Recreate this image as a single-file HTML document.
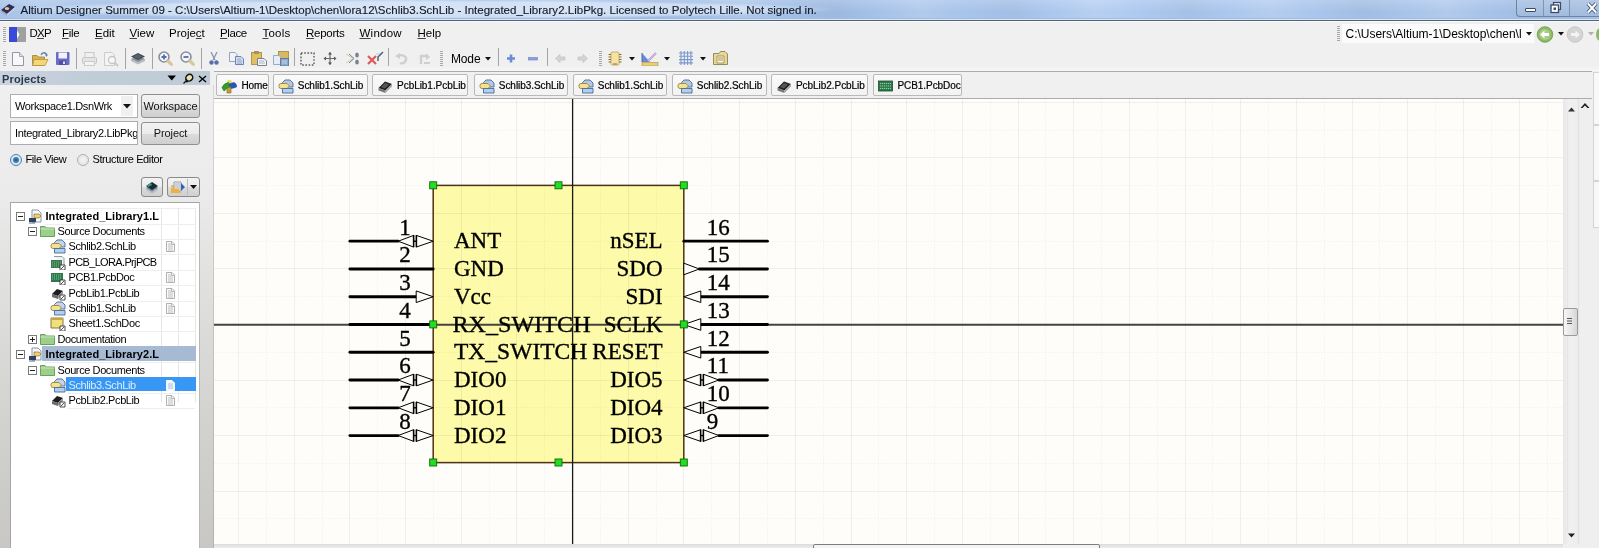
<!DOCTYPE html>
<html><head><meta charset="utf-8">
<style>
*{margin:0;padding:0;box-sizing:border-box}
body{will-change:transform}
html,body{width:1599px;height:548px;overflow:hidden;background:#f0f0f0;font-family:"Liberation Sans",sans-serif;color:#000}
.a{position:absolute}
#title{left:0;top:0;width:1599px;height:19px;background:repeating-linear-gradient(75deg,rgba(255,255,255,0) 0px,rgba(255,255,255,0.12) 40px,rgba(255,255,255,0) 80px,rgba(0,0,40,0.04) 130px,rgba(255,255,255,0) 170px),linear-gradient(90deg,#a6c2e8 0%,#aac6ee 30%,#a2bfe6 50%,#aecaf0 70%,#a4c0e6 100%)}
#title .t{left:20.5px;top:4px;font-size:11.5px;color:#141c2a;white-space:nowrap;letter-spacing:0.02px;-webkit-text-stroke:0.15px #141c2a}
#menu{left:0;top:20px;width:1599px;height:26px;background:#f0f0f0}
.mi{top:7px;font-size:11.5px;color:#000;white-space:nowrap}
.mi u{text-decoration:underline;text-decoration-color:#444}
#tb{left:0;top:46px;width:1599px;height:25px;background:#f0f0f0}
#proj{left:0;top:71px;width:210px;height:15px;background:linear-gradient(#d3dbe6,#c9d3df)}
#tabs{left:214px;top:71px;width:1378px;height:28px;background:#f0f0f0;border-top:1px solid #acacac;border-bottom:1px solid #acacac}
.tab{top:2px;height:22px;border:1px solid #b9b9b9;border-radius:2px;background:linear-gradient(#fafafa,#f2f2f2);font-size:10px;color:#000;white-space:nowrap}
.tab span{position:absolute;top:4.5px;-webkit-text-stroke:0.2px #000;letter-spacing:-0.05px}
#canvas{left:214px;top:99px;width:1349px;height:445px;background:#fffdf8}

#lp{left:0;top:71px;width:214px;height:477px;background:linear-gradient(#f0f0f0 0px,#ebebeb 120px,#dcdcda 250px,#cfcfcc 380px,#c8c7c4 477px)}
#lp .hdr{left:0;top:0;width:210px;height:14px;background:linear-gradient(90deg,#c9d3df,#c2cdda 40%,#bfcad7)}
#lp .hdr b{position:absolute;left:2px;top:2px;font-size:11px;color:#2b3a4a;letter-spacing:0.15px}
.combo{background:#fff;border:1px solid #abadb3;height:24px;width:128px}
.combo span{position:absolute;left:4px;top:5px;font-size:11px;letter-spacing:-0.35px;color:#000;white-space:nowrap}
.btn{border:1px solid #8f8f8f;border-radius:3px;background:linear-gradient(#f3f3f3 0%,#ebebeb 50%,#dcdcdc 51%,#cfcfcf 100%);height:24px;width:59px}
.btn span{position:absolute;top:5px;font-size:11px;letter-spacing:-0.1px;color:#111;white-space:nowrap;left:0;width:100%;text-align:center}
.rad{width:12px;height:12px;border-radius:50%;border:1px solid #8a8a8a;background:radial-gradient(#fff,#e6e6e6)}
.lbl{font-size:11px;letter-spacing:-0.4px;color:#000;white-space:nowrap}
#tree{left:10px;top:131px;width:190px;height:350px;background:#fff;border:1px solid #a5a5a5;border-right-color:#b8b8b8}
.row{position:absolute;left:0;width:188px;height:15px}
.row .tx{position:absolute;top:1px;font-size:11px;letter-spacing:-0.4px;color:#000;white-space:nowrap}
.row .tb{font-weight:bold;letter-spacing:0.05px}
.exp{position:absolute;width:9px;height:9px;border:1px solid #7a7a7a;background:#fff}
.exp:before{content:"";position:absolute;left:1px;top:3px;width:5px;height:1px;background:#222}
.exp.p:after{content:"";position:absolute;left:3px;top:1px;width:1px;height:5px;background:#222}
.colv{position:absolute;top:5px;width:1px;height:194px;background:#e6e6e6}
.rowl{position:absolute;height:1px;background:#eeeeee}
</style></head><body>
<div id="title" class="a">
<div class="a" style="left:0;top:0;width:1599px;height:19px;background:linear-gradient(180deg,rgba(255,255,255,0.18),rgba(255,255,255,0) 60%)"></div>
<div class="a" style="left:8px;top:0px;width:830px;height:19px;background:radial-gradient(closest-side,rgba(232,240,250,0.75) 0%,rgba(232,240,250,0.6) 80%,rgba(232,240,250,0) 100%)"></div>

<svg class="a" style="left:0;top:1px" width="16" height="16"><path d="M1 9L9 3L15 6L7 13Z" fill="#2a2e5a"/><path d="M1 9L7 13L7 15L1 11Z" fill="#9aa8c0"/><path d="M7 13L15 6V8L7 15Z" fill="#c8d0e0"/><ellipse cx="7" cy="7.5" rx="2.2" ry="1.6" fill="#e8c880"/></svg>
<div class="t a">Altium Designer Summer 09 - C:\Users\Altium-1\Desktop\chen\lora12\Schlib3.SchLib - Integrated_Library2.LibPkg. Licensed to Polytech Lille. Not signed in.</div>
<div class="a" style="left:1516px;top:0;width:27px;height:17px;border:1px solid #6a83a6;border-top:none;border-right:none;border-radius:0 0 0 4px;background:linear-gradient(#b4cae6,#a2bbdd)"></div>
<div class="a" style="left:1543px;top:0;width:26px;height:17px;border-bottom:1px solid #6a83a6;border-left:1px solid #7d94b5;background:linear-gradient(#b4cae6,#a2bbdd)"></div>
<div class="a" style="left:1569px;top:0;width:30px;height:17px;border-bottom:1px solid #6a83a6;border-left:1px solid #7d94b5;background:linear-gradient(#b4cae6,#a2bbdd)"></div>
<div class="a" style="left:1525px;top:8px;width:11px;height:4px;background:#fff;border:1px solid #3a4a6a;border-radius:1px"></div>
<svg class="a" style="left:1549px;top:1px" width="14" height="14"><rect x="4.5" y="1.5" width="7" height="7" fill="#e8eef8" stroke="#3a4a6a" stroke-width="1.2"/><rect x="2" y="4" width="7.5" height="7.5" fill="#fff" stroke="#3a4a6a" stroke-width="1.3"/><rect x="4.5" y="6.5" width="2.5" height="2.5" fill="#3a4a6a"/></svg>
<svg class="a" style="left:1586px;top:2px" width="13" height="12"><path d="M2 1.5L10 10.5M10 1.5L2 10.5" stroke="#3a4a6a" stroke-width="3.6"/><path d="M2 1.5L10 10.5M10 1.5L2 10.5" stroke="#fff" stroke-width="2"/></svg>
</div>
<div id="menu" class="a">
<svg class="a" style="left:3px;top:7px" width="3" height="15"><path d="M0 0.5H3M0 2.5H3M0 4.5H3M0 6.5H3M0 8.5H3M0 10.5H3M0 12.5H3M0 14.5H3" stroke="#a8a8a8" stroke-width="1"/></svg>
<svg class="a" style="left:9px;top:7px" width="17" height="15"><rect x="0" y="0" width="8" height="15" fill="#3a4ad8"/><rect x="8" y="0" width="9" height="15" fill="#a0a0a0"/><path d="M4 3L10 7.5L4 12Z" fill="#3a4ad8"/><path d="M8 3.5L10.5 7.5L8 11.5" fill="#fff"/></svg>
<div class="mi a" style="left:29.5px;letter-spacing:-0.8px">D<u>X</u>P</div>
<div class="mi a" style="left:62px;letter-spacing:-0.3px"><u>F</u>ile</div>
<div class="mi a" style="left:95px"><u>E</u>dit</div>
<div class="mi a" style="left:129.5px"><u>V</u>iew</div>
<div class="mi a" style="left:169px">Proje<u>c</u>t</div>
<div class="mi a" style="left:220px;letter-spacing:-0.4px"><u>P</u>lace</div>
<div class="mi a" style="left:262.5px;letter-spacing:0.2px"><u>T</u>ools</div>
<div class="mi a" style="left:306px;letter-spacing:-0.25px"><u>R</u>eports</div>
<div class="mi a" style="left:359.5px;letter-spacing:0.25px"><u>W</u>indow</div>
<div class="mi a" style="left:417.5px"><u>H</u>elp</div>
<svg class="a" style="left:1337px;top:6px" width="4" height="15"><path d="M0 0.5H3M0 2.5H3M0 4.5H3M0 6.5H3M0 8.5H3M0 10.5H3M0 12.5H3M0 14.5H3" stroke="#a8a8a8" stroke-width="1"/></svg>
<div class="a" style="left:1342px;top:4px;width:192px;height:19px;background:#fbfbfb"></div>
<div class="mi a" style="left:1345.5px;font-size:12px;letter-spacing:-0.02px">C:\Users\Altium-1\Desktop\chen\l</div>
<svg class="a" style="left:1526px;top:12px" width="6" height="4"><path d="M0 0H6L3 3.5Z" fill="#111"/></svg>
<svg class="a" style="left:1536px;top:6px" width="18" height="17"><circle cx="9" cy="8.5" r="7.8" fill="#8cb868" stroke="#6a9a4a" stroke-width="0.8"/><circle cx="9" cy="8.5" r="5.5" fill="#a8cc88"/><path d="M4 8.5L8.5 4.5V7H13V10H8.5V12.5Z" fill="#fff"/></svg>
<svg class="a" style="left:1558px;top:12px" width="6" height="4"><path d="M0 0H6L3 3.5Z" fill="#111"/></svg>
<svg class="a" style="left:1566px;top:6px" width="18" height="17"><circle cx="9" cy="8.5" r="7.8" fill="#d4d4d4" stroke="#c0c0c0" stroke-width="0.8"/><path d="M14 8.5L9.5 4.5V7H5V10H9.5V12.5Z" fill="#f4f4f4"/></svg>
<svg class="a" style="left:1588px;top:12px" width="6" height="4"><path d="M0 0H6L3 3.5Z" fill="#b0b0b0"/></svg>
<div class="a" style="left:1596px;top:8px;width:8px;height:13px;border-radius:50%;background:#8cb868"></div>
</div>
<div class="a" style="left:0;top:18px;width:1599px;height:1px;background:#a4bcd8"></div>
<div class="a" style="left:0;top:19px;width:1599px;height:1px;background:#d6e6f8"></div>
<div class="a" style="left:0;top:20px;width:1599px;height:1px;background:#52627a"></div>
<div class="a" style="left:0;top:21px;width:1599px;height:1px;background:#f9f9fb"></div>
<div id="tb" class="a">
<svg class="a" style="left:3px;top:5px" width="3" height="15"><path d="M0 0.5H3M0 2.5H3M0 4.5H3M0 6.5H3M0 8.5H3M0 10.5H3M0 12.5H3M0 14.5H3" stroke="#a8a8a8" stroke-width="1"/></svg>
<svg class="a" style="left:12px;top:6px" width="12" height="14"><path d="M0.5 0.5H7.5L11.5 4.5V13.5H0.5Z" fill="#f8f8fa" stroke="#9098a8" stroke-width="1"/><path d="M7.5 0.5V4.5H11.5" fill="#dde" stroke="#9098a8" stroke-width="0.8"/></svg>
<svg class="a" style="left:32px;top:5px" width="17" height="15"><path d="M0.5 4.5H5L6.5 6H12.5V14.5H0.5Z" fill="#d8b450" stroke="#a08030" stroke-width="0.8"/><path d="M2 8.5H16L13 14.5H0.5Z" fill="#f4d878" stroke="#b89038" stroke-width="0.8"/><path d="M9 4C10 1 14 1 14.5 4" fill="none" stroke="#6080b0" stroke-width="1.3"/><path d="M13 3.5L16 3.5L14.5 6Z" fill="#6080b0"/></svg>
<svg class="a" style="left:56px;top:6px" width="14" height="14"><rect x="0" y="0" width="13.5" height="13" rx="1" fill="#6a6ac8"/><rect x="2.5" y="0.5" width="8.5" height="6" fill="#f2f2fa"/><rect x="3" y="8.5" width="7" height="4.5" fill="#5050a0"/><rect x="7" y="9.5" width="2" height="2.5" fill="#e0e0f0"/></svg>
<div class="a" style="left:76px;top:2px;width:1px;height:21px;background:#a4a4a4"></div>
<svg class="a" style="left:82px;top:6px" width="15" height="14"><rect x="3" y="0.5" width="9" height="5" fill="#f0f0f0" stroke="#c8c8c8"/><rect x="0.5" y="5.5" width="14" height="6" rx="1" fill="#e4e4e4" stroke="#c4c4c4"/><rect x="2.5" y="9.5" width="10" height="4" fill="#f4f4f4" stroke="#cccccc"/></svg>
<svg class="a" style="left:104px;top:6px" width="16" height="15"><path d="M0.5 0.5H8L10.5 3V13.5H0.5Z" fill="#f4f4f4" stroke="#cccccc"/><circle cx="8" cy="8" r="3.5" fill="#f8f8f8" stroke="#c4c4c4" stroke-width="1.3"/><path d="M10.5 10.5L14 14" stroke="#c8c8c8" stroke-width="2"/></svg>
<div class="a" style="left:125px;top:2px;width:1px;height:21px;background:#a4a4a4"></div>
<svg class="a" style="left:130px;top:5px" width="16" height="14"><path d="M1 8L8 4.5L15 8L8 11.5Z" fill="#8a929a"/><path d="M1 8V10L8 13.5L15 10V8L8 11.5Z" fill="#b8bcc4"/><path d="M1 5.5L8 2L15 5.5L8 9Z" fill="#3a4450"/><path d="M3 5.5L8 3L13 5.5L8 8Z" fill="#556070"/></svg>
<div class="a" style="left:152px;top:2px;width:1px;height:21px;background:#a4a4a4"></div>
<svg class="a" style="left:158px;top:5px" width="15" height="15"><circle cx="6" cy="6" r="5" fill="#f4f6fa" stroke="#8a8e98" stroke-width="1.6"/><path d="M12 12L9.5 9.5" stroke="#c8b890" stroke-width="3" stroke-linecap="round"/><path d="M10.5 10.5L13.5 13.5" stroke="#d8c8a0" stroke-width="3" stroke-linecap="round"/><path d="M3.5 6H8.5M6 3.5V8.5" stroke="#4a70b8" stroke-width="1.8"/></svg>
<svg class="a" style="left:180px;top:5px" width="15" height="15"><circle cx="6" cy="6" r="5" fill="#f4f6fa" stroke="#8a8e98" stroke-width="1.6"/><path d="M12 12L9.5 9.5" stroke="#c8b890" stroke-width="3" stroke-linecap="round"/><path d="M10.5 10.5L13.5 13.5" stroke="#d8c8a0" stroke-width="3" stroke-linecap="round"/><path d="M3.5 6H8.5" stroke="#4a70b8" stroke-width="1.8"/></svg>
<div class="a" style="left:201px;top:2px;width:1px;height:21px;background:#a4a4a4"></div>
<svg class="a" style="left:209px;top:6px" width="10" height="13"><path d="M2 0L6 8M8 0L4 8" stroke="#8898b8" stroke-width="1.4"/><circle cx="2.5" cy="10.5" r="2.2" fill="#5870a8"/><circle cx="7.5" cy="10.5" r="2.2" fill="#5870a8"/></svg>
<svg class="a" style="left:229px;top:5px" width="16" height="14"><path d="M0.5 1.5H6L8 3.5V10.5H0.5Z" fill="#f0f2f8" stroke="#8090b0" stroke-width="0.8"/><path d="M6.5 5.5H12L14.5 8V13.5H6.5Z" fill="#d8e0f0" stroke="#6078a8" stroke-width="0.9"/><path d="M8 8H12M8 10H13M8 12H13" stroke="#7088b8" stroke-width="0.7"/></svg>
<svg class="a" style="left:251px;top:5px" width="17" height="15"><rect x="0.5" y="1.5" width="10" height="12" fill="#e0c060" stroke="#a08838" stroke-width="0.8"/><rect x="3" y="0" width="5" height="3" fill="#a89060"/><path d="M6.5 7.5H13L15.5 10V14.5H6.5Z" fill="#f4f4f8" stroke="#687888" stroke-width="0.9"/><path d="M8 10H13M8 12H14" stroke="#8898a8" stroke-width="0.7"/></svg>
<svg class="a" style="left:273px;top:4px" width="17" height="17"><rect x="5.5" y="1.5" width="10" height="9" fill="#d8b860" stroke="#a08838" stroke-width="0.8"/><path d="M0.5 5.5H6L8 7.5V14.5H0.5Z" fill="#e8ecf4" stroke="#8898b8" stroke-width="0.8"/><rect x="7.5" y="8.5" width="8" height="7.5" fill="#8aa8d0" stroke="#50709a" stroke-width="0.8"/><path d="M9 11H14M9 13H14" stroke="#d0e0f0" stroke-width="0.8"/></svg>
<div class="a" style="left:294px;top:2px;width:1px;height:21px;background:#a4a4a4"></div>
<svg class="a" style="left:300px;top:6px" width="16" height="14"><rect x="1" y="1" width="13" height="12" fill="none" stroke="#5a5a5a" stroke-width="1.4" stroke-dasharray="1.6 1.6"/></svg>
<svg class="a" style="left:323px;top:6px" width="14" height="13"><path d="M7 0.5V12.5M1 6.5H13" stroke="#6a6a70" stroke-width="1.2"/><path d="M7 0L5 2.5H9ZM7 13L5 10.5H9ZM0.5 6.5L3 4.5V8.5ZM13.5 6.5L11 4.5V8.5Z" fill="#55555a"/></svg>
<svg class="a" style="left:345px;top:5px" width="15" height="15"><path d="M1 3L8 7.5L1 12" fill="none" stroke="#c8d0a8" stroke-width="1"/><path d="M4 3L9 7.5L4 12" fill="none" stroke="#7a8088" stroke-width="1"/><ellipse cx="12" cy="4" rx="1.8" ry="2.5" fill="#7a8088"/><ellipse cx="12" cy="11" rx="1.8" ry="2.5" fill="#7a8088"/></svg>
<svg class="a" style="left:366px;top:4px" width="19" height="17"><path d="M2 6L10 14M10 6L2 14" stroke="#e05858" stroke-width="2.2"/><path d="M10 4H16" stroke="#a8d8e8" stroke-width="1"/><path d="M12 11V7L17 2" fill="none" stroke="#506070" stroke-width="1.5"/></svg>
<div class="a" style="left:388px;top:2px;width:1px;height:21px;background:#a4a4a4"></div>
<svg class="a" style="left:395px;top:6px" width="13" height="13"><path d="M3 4C7 2 12 4 11 8C10 11 7 12 5 11" fill="none" stroke="#cfcfcf" stroke-width="2.4"/><path d="M0 4L5 1V7Z" fill="#cfcfcf"/></svg>
<svg class="a" style="left:418px;top:6px" width="13" height="13"><path d="M3 12V4H9" fill="none" stroke="#cfcfcf" stroke-width="2.4"/><path d="M8 1L12 5L8 8Z" fill="#cfcfcf"/><path d="M6 11H12" stroke="#cfcfcf" stroke-width="2"/></svg>
<svg class="a" style="left:440px;top:5px" width="3" height="15"><path d="M0 0.5H3M0 2.5H3M0 4.5H3M0 6.5H3M0 8.5H3M0 10.5H3M0 12.5H3M0 14.5H3" stroke="#a8a8a8" stroke-width="1"/></svg>
<div class="mi a" style="left:451px;top:6px;font-size:12px;letter-spacing:-0.15px">Mode</div>
<svg class="a" style="left:485px;top:10.5px" width="6" height="4"><path d="M0 0H6L3 3.5Z" fill="#111"/></svg>
<div class="a" style="left:498px;top:2px;width:1px;height:21px;background:#a4a4a4"></div>
<svg class="a" style="left:506px;top:8px" width="10" height="9"><path d="M5 0.5V8.5M1 4.5H9" stroke="#6a8ad8" stroke-width="2.6"/></svg>
<svg class="a" style="left:528px;top:11px" width="10" height="4"><rect x="0.5" y="0.5" width="9" height="2.5" fill="#8aa0e0" stroke="#6a80c8" stroke-width="0.6"/></svg>
<div class="a" style="left:547px;top:2px;width:1px;height:21px;background:#a4a4a4"></div>
<svg class="a" style="left:555px;top:7px" width="11" height="11"><path d="M0.5 5.5L5 1.5V4H10V7H5V9.5Z" fill="#d4d4d4" stroke="#c4c4c4" stroke-width="0.8"/></svg>
<svg class="a" style="left:577px;top:7px" width="11" height="11"><path d="M10.5 5.5L6 1.5V4H1V7H6V9.5Z" fill="#d4d4d4" stroke="#c4c4c4" stroke-width="0.8"/></svg>
<svg class="a" style="left:599px;top:5px" width="3" height="15"><path d="M0 0.5H3M0 2.5H3M0 4.5H3M0 6.5H3M0 8.5H3M0 10.5H3M0 12.5H3M0 14.5H3" stroke="#a8a8a8" stroke-width="1"/></svg>
<svg class="a" style="left:608px;top:5px" width="14" height="15"><rect x="3" y="1" width="8" height="13" rx="1" fill="#f4e4a4" stroke="#c0a050" stroke-width="0.8"/><path d="M0.5 3.5H3M0.5 6H3M0.5 8.5H3M0.5 11H3M11 3.5H13.5M11 6H13.5M11 8.5H13.5M11 11H13.5" stroke="#8a6a30" stroke-width="1.2"/><path d="M5 13H9" stroke="#8a7040"/></svg>
<svg class="a" style="left:629px;top:11px" width="6" height="4"><path d="M0 0H6L3 3.5Z" fill="#111"/></svg>
<svg class="a" style="left:641px;top:5px" width="18" height="16"><path d="M1 2L9 11H1Z" fill="#6a8ad8"/><path d="M1 2V11" stroke="#4a6ab8"/><path d="M7 10L15 2" stroke="#b890c8" stroke-width="2"/><path d="M7 10L15 2" stroke="#e0d0f0" stroke-width="0.8"/><rect x="1" y="11.5" width="16" height="3.5" fill="#e8d070" stroke="#a89040" stroke-width="0.6"/></svg>
<svg class="a" style="left:664px;top:11px" width="6" height="4"><path d="M0 0H6L3 3.5Z" fill="#111"/></svg>
<svg class="a" style="left:679px;top:5px" width="14" height="14"><path d="M2 0V14M5.3 0V14M8.6 0V14M11.9 0V14M0 2H14M0 5.3H14M0 8.6H14M0 11.9H14" stroke="#7b98cc" stroke-width="1.1"/></svg>
<svg class="a" style="left:700px;top:11px" width="6" height="4"><path d="M0 0H6L3 3.5Z" fill="#111"/></svg>
<svg class="a" style="left:713px;top:5px" width="16" height="14"><path d="M0.5 2.5H6L7.5 0.5H12L14.5 3V13.5H0.5Z" fill="#e8d898" stroke="#908050" stroke-width="0.9"/><path d="M4 5H11V12H4Z" fill="#fff8d8" stroke="#8a7a40" stroke-width="0.7"/><path d="M5 7H10M5 9H10" stroke="#8a7a40" stroke-width="0.8"/></svg>
<div class="a" style="left:214px;top:20px;width:1385px;height:5px;background:linear-gradient(#f0f0f0,#f7f7f7)"></div>
</div>
<div id="lp" class="a">
<div class="hdr a"><b>Projects</b>
<svg class="a" style="left:167px;top:4px" width="10" height="6"><path d="M0.5 0.5H9L4.75 5.5Z" fill="#000"/></svg>
<svg class="a" style="left:183px;top:1.5px" width="11" height="11"><ellipse cx="6.3" cy="4.7" rx="3.6" ry="3.2" transform="rotate(-40 6.3 4.7)" fill="#e6e2b0" stroke="#111" stroke-width="1.5"/><path d="M2.2 5.5L5.5 9L3 9.5Z" fill="#111"/><path d="M3 8L0.5 10.5" stroke="#111" stroke-width="1.2"/></svg>
<svg class="a" style="left:198px;top:3.5px" width="9" height="8"><path d="M1 1L8 7M8 1L1 7" stroke="#000" stroke-width="1.4"/></svg>
</div>
<div class="combo a" style="left:10px;top:23px"><span>Workspace1.DsnWrk</span><div class="a" style="left:110px;top:1px;width:12px;height:20px;background:#f0f0f0"></div><svg class="a" style="left:112px;top:9px" width="8" height="5"><path d="M0 0H8L4 4.5Z" fill="#111"/></svg></div>
<div class="btn a" style="left:141px;top:23px"><span>Workspace</span></div>
<div class="combo a" style="left:10px;top:50px;height:24px;overflow:hidden"><span style="left:4px">Integrated_Library2.LibPkg</span></div>
<div class="btn a" style="left:141px;top:51px;height:23px"><span style="top:4px">Project</span></div>
<div class="rad a" style="left:9.5px;top:83px;border-color:#5a7a98;background:radial-gradient(circle,#1d5b8c 0,#3d86c0 2.5px,#cfe3f3 3.5px,#eef5fb 6px)"></div>
<div class="lbl a" style="left:25.5px;top:82px">File View</div>
<div class="rad a" style="left:77px;top:83px;border-color:#b0b0b0;background:radial-gradient(circle,#f4f4f4,#e0e0e0)"></div>
<div class="lbl a" style="left:92.5px;top:82px">Structure Editor</div>
<div class="btn a" style="left:140.5px;top:106px;width:22px;height:20px;border-color:#8a8a8a"></div>
<div class="btn a" style="left:167px;top:106px;width:33px;height:20px;border-color:#8a8a8a"><div class="a" style="left:19px;top:1px;width:1px;height:16px;background:#bcbcbc"></div><svg class="a" style="left:22px;top:7px" width="7" height="4"><path d="M0 0H7L3.5 4Z" fill="#111"/></svg></div>
<svg class="a" style="left:144px;top:109px" width="16" height="15"><path d="M2 8L8 4L14 8L8 12Z" fill="#7a8a9a"/><path d="M2 6L8 2L14 6L8 10Z" fill="#1a2a3a"/><path d="M3 5.5L7 3L8 5L4 7Z" fill="#3aa070"/><path d="M2 8L8 12L14 8V10L8 14L2 10Z" fill="#b8c0c8"/></svg>
<svg class="a" style="left:170px;top:109px" width="17" height="15"><path d="M1 5H7V13H1Z" fill="#e8c070"/><path d="M4 2H11V11H4Z" fill="#f4f4f4" stroke="#8a8a8a" stroke-width="0.8"/><path d="M5 4H10M5 6H10M5 8H10" stroke="#8090a0" stroke-width="0.7"/><path d="M1 9L9 9L11 13H1Z" fill="#f0b040"/><path d="M11 3L15 7L11 11Z" fill="#3060c0"/></svg>
<div id="tree" class="a">
<div class="rowl" style="left:34px;width:150px;top:5px"></div><div class="colv" style="left:150px"></div><div class="colv" style="left:167px"></div><div class="colv" style="left:184px"></div>
<div class="row" style="top:5.5px"><div class="rowl" style="left:33.5px;width:150.5px;top:15px"></div><div class="exp" style="left:5px;top:3px"></div><svg class="a" style="left:17px;top:0px" width="14" height="15"><path d="M4 1H10L13 4V13H4Z" fill="#f8f8f8" stroke="#7a8aa0" stroke-width="0.9"/><path d="M6 5H11L13 7L11 9H6Z" fill="#f0d070" stroke="#806020" stroke-width="0.6"/><path d="M1 9H8V13H1Z" fill="#304060"/><path d="M2 13V15M4 13V15M6 13V15" stroke="#304060" stroke-width="0.8"/></svg><div class="a" style="left:34.5px;top:0;width:115.5px;height:15px;overflow:hidden"><span class="tx tb" style="left:0">Integrated_Library1.L</span></div></div>
<div class="row" style="top:20.9px"><div class="rowl" style="left:45.5px;width:138.5px;top:15px"></div><div class="exp" style="left:17px;top:3px"></div><svg class="a" style="left:29px;top:1px" width="15" height="12"><path d="M0.5 1.5H5L6.5 3H14.5V11.5H0.5Z" fill="#9dcf8a" stroke="#5a9a50" stroke-width="0.9"/><path d="M0.5 4H14.5" stroke="#c8e8b8" stroke-width="1"/></svg><span class="tx" style="left:46.5px">Source Documents</span></div>
<div class="row" style="top:36.3px"><div class="rowl" style="left:56.5px;width:127.5px;top:15px"></div><svg class="a" style="left:39px;top:0px" width="16" height="15"><path d="M4.5 3.5L7 1H12L15 4V8H4.5Z" fill="#c4d4ea" stroke="#4a6a9a" stroke-width="0.9"/><path d="M1 6.5Q1 4.5 3 4.5H9L11.5 7L9 9.5H3Q1 9.5 1 7.5Z" fill="#f4e290" stroke="#9a8438" stroke-width="0.9"/><path d="M4.5 9.5H15V14H4.5Z" fill="#b0d0ee" stroke="#4a6a9a" stroke-width="0.9"/></svg><span class="tx" style="left:57.5px">Schlib2.SchLib</span><svg class="a" style="left:155px;top:2px" width="9" height="11"><path d="M0.5 0.5H6L8.5 3V10.5H0.5Z" fill="#fafafa" stroke="#a8a8a8" stroke-width="0.9"/><path d="M5.5 0.5V3.5H8.5" fill="none" stroke="#a8a8a8" stroke-width="0.8"/><path d="M2 3H5M2 5H7M2 7H7M2 9H7" stroke="#b0b0b0" stroke-width="0.8"/></svg></div>
<div class="row" style="top:51.7px"><div class="rowl" style="left:56.5px;width:127.5px;top:15px"></div><svg class="a" style="left:39px;top:1px" width="16" height="14"><path d="M4 0.5H12L14 2.5V9" fill="#f4f4f4" stroke="#708090" stroke-width="0.8"/><path d="M1 4H12V12H1Z" fill="#3a7a50"/><path d="M2 6H11M2 8H11M2 10H11" stroke="#90d0a0" stroke-width="0.7" stroke-dasharray="1 1"/><path d="M10 9H15V14H10Z" fill="#fff" stroke="#222" stroke-width="0.8"/><path d="M11 13L14 10" stroke="#222" stroke-width="0.8"/></svg><span class="tx" style="left:57.5px;letter-spacing:-0.65px">PCB_LORA.PrjPCB</span></div>
<div class="row" style="top:67.1px"><div class="rowl" style="left:56.5px;width:127.5px;top:15px"></div><svg class="a" style="left:39px;top:1px" width="16" height="14"><path d="M1 2H13V11H1Z" fill="#2e7a4c"/><path d="M2 4H12M2 6H12M2 8H12" stroke="#8fd8a8" stroke-width="0.8" stroke-dasharray="1 1"/><path d="M10 9H15V14H10Z" fill="#fff" stroke="#222" stroke-width="0.8"/><path d="M11 13L14 10" stroke="#222" stroke-width="0.8"/></svg><span class="tx" style="left:57.5px">PCB1.PcbDoc</span><svg class="a" style="left:155px;top:2px" width="9" height="11"><path d="M0.5 0.5H6L8.5 3V10.5H0.5Z" fill="#fafafa" stroke="#a8a8a8" stroke-width="0.9"/><path d="M5.5 0.5V3.5H8.5" fill="none" stroke="#a8a8a8" stroke-width="0.8"/><path d="M2 3H5M2 5H7M2 7H7M2 9H7" stroke="#b0b0b0" stroke-width="0.8"/></svg></div>
<div class="row" style="top:82.5px"><div class="rowl" style="left:56.5px;width:127.5px;top:15px"></div><svg class="a" style="left:39px;top:0px" width="16" height="15"><path d="M2 8L7 3L13 5L8 10Z" fill="#1e1e1e"/><path d="M2 8L8 10V13L2 11Z" fill="#6a6a6a"/><path d="M8 10L13 5V8L8 13Z" fill="#9a9a9a"/><path d="M10 9H15V14H10Z" fill="#fff" stroke="#222" stroke-width="0.8"/><path d="M11 13L14 10" stroke="#222" stroke-width="0.8"/></svg><span class="tx" style="left:57.5px">PcbLib1.PcbLib</span><svg class="a" style="left:155px;top:2px" width="9" height="11"><path d="M0.5 0.5H6L8.5 3V10.5H0.5Z" fill="#fafafa" stroke="#a8a8a8" stroke-width="0.9"/><path d="M5.5 0.5V3.5H8.5" fill="none" stroke="#a8a8a8" stroke-width="0.8"/><path d="M2 3H5M2 5H7M2 7H7M2 9H7" stroke="#b0b0b0" stroke-width="0.8"/></svg></div>
<div class="row" style="top:97.9px"><div class="rowl" style="left:56.5px;width:127.5px;top:15px"></div><svg class="a" style="left:39px;top:0px" width="16" height="15"><path d="M4.5 3.5L7 1H12L15 4V8H4.5Z" fill="#c4d4ea" stroke="#4a6a9a" stroke-width="0.9"/><path d="M1 6.5Q1 4.5 3 4.5H9L11.5 7L9 9.5H3Q1 9.5 1 7.5Z" fill="#f4e290" stroke="#9a8438" stroke-width="0.9"/><path d="M4.5 9.5H15V14H4.5Z" fill="#b0d0ee" stroke="#4a6a9a" stroke-width="0.9"/></svg><span class="tx" style="left:57.5px">Schlib1.SchLib</span><svg class="a" style="left:155px;top:2px" width="9" height="11"><path d="M0.5 0.5H6L8.5 3V10.5H0.5Z" fill="#fafafa" stroke="#a8a8a8" stroke-width="0.9"/><path d="M5.5 0.5V3.5H8.5" fill="none" stroke="#a8a8a8" stroke-width="0.8"/><path d="M2 3H5M2 5H7M2 7H7M2 9H7" stroke="#b0b0b0" stroke-width="0.8"/></svg></div>
<div class="row" style="top:113.3px"><div class="rowl" style="left:56.5px;width:127.5px;top:15px"></div><svg class="a" style="left:39px;top:1px" width="16" height="14"><path d="M1 1H13V11H1Z" fill="#f4e07a" stroke="#7a6a30" stroke-width="0.9"/><path d="M1 1H13V3H1Z" fill="#c8a840"/><path d="M10 9H15V14H10Z" fill="#fff" stroke="#222" stroke-width="0.8"/><path d="M11 13L14 10" stroke="#222" stroke-width="0.8"/></svg><span class="tx" style="left:57.5px">Sheet1.SchDoc</span></div>
<div class="row" style="top:128.7px"><div class="rowl" style="left:45.5px;width:138.5px;top:15px"></div><div class="exp p" style="left:17px;top:3px"></div><svg class="a" style="left:29px;top:1px" width="15" height="12"><path d="M0.5 1.5H5L6.5 3H14.5V11.5H0.5Z" fill="#9dcf8a" stroke="#5a9a50" stroke-width="0.9"/><path d="M0.5 4H14.5" stroke="#c8e8b8" stroke-width="1"/></svg><span class="tx" style="left:46.5px">Documentation</span></div>
<div class="row" style="top:144.1px"><div class="rowl" style="left:33.5px;width:150.5px;top:15px"></div><div class="a" style="left:31px;top:-1px;width:154px;height:15px;background:#a6bad4"></div><div class="exp" style="left:5px;top:3px"></div><svg class="a" style="left:17px;top:0px" width="14" height="15"><path d="M4 1H10L13 4V13H4Z" fill="#f8f8f8" stroke="#7a8aa0" stroke-width="0.9"/><path d="M6 5H11L13 7L11 9H6Z" fill="#f0d070" stroke="#806020" stroke-width="0.6"/><path d="M1 9H8V13H1Z" fill="#304060"/><path d="M2 13V15M4 13V15M6 13V15" stroke="#304060" stroke-width="0.8"/></svg><div class="a" style="left:34.5px;top:0;width:115.5px;height:15px;overflow:hidden"><span class="tx tb" style="left:0">Integrated_Library2.L</span></div></div>
<div class="row" style="top:159.5px"><div class="rowl" style="left:45.5px;width:138.5px;top:15px"></div><div class="exp" style="left:17px;top:3px"></div><svg class="a" style="left:29px;top:1px" width="15" height="12"><path d="M0.5 1.5H5L6.5 3H14.5V11.5H0.5Z" fill="#9dcf8a" stroke="#5a9a50" stroke-width="0.9"/><path d="M0.5 4H14.5" stroke="#c8e8b8" stroke-width="1"/></svg><span class="tx" style="left:46.5px">Source Documents</span></div>
<div class="row" style="top:174.9px"><div class="rowl" style="left:56.5px;width:127.5px;top:15px"></div><div class="a" style="left:54.5px;top:-1px;width:130.5px;height:14.5px;background:#3897f4"></div><svg class="a" style="left:39px;top:0px" width="16" height="15"><path d="M4.5 3.5L7 1H12L15 4V8H4.5Z" fill="#c4d4ea" stroke="#4a6a9a" stroke-width="0.9"/><path d="M1 6.5Q1 4.5 3 4.5H9L11.5 7L9 9.5H3Q1 9.5 1 7.5Z" fill="#f4e290" stroke="#9a8438" stroke-width="0.9"/><path d="M4.5 9.5H15V14H4.5Z" fill="#b0d0ee" stroke="#4a6a9a" stroke-width="0.9"/></svg><span class="tx" style="left:57.5px;color:#dcecff">Schlib3.SchLib</span><svg class="a" style="left:155px;top:2px" width="9" height="11"><path d="M0.5 0.5H6L8.5 3V10.5H0.5Z" fill="#f6f6f6" stroke="#ffffff" stroke-width="0.9"/><path d="M2 4H7M2 6H7M2 8H7" stroke="#8ab8e8" stroke-width="0.8"/></svg></div>
<div class="row" style="top:190.3px"><div class="rowl" style="left:56.5px;width:127.5px;top:15px"></div><svg class="a" style="left:39px;top:0px" width="16" height="15"><path d="M2 8L7 3L13 5L8 10Z" fill="#1e1e1e"/><path d="M2 8L8 10V13L2 11Z" fill="#6a6a6a"/><path d="M8 10L13 5V8L8 13Z" fill="#9a9a9a"/><path d="M10 9H15V14H10Z" fill="#fff" stroke="#222" stroke-width="0.8"/><path d="M11 13L14 10" stroke="#222" stroke-width="0.8"/></svg><span class="tx" style="left:57.5px">PcbLib2.PcbLib</span><svg class="a" style="left:155px;top:2px" width="9" height="11"><path d="M0.5 0.5H6L8.5 3V10.5H0.5Z" fill="#fafafa" stroke="#a8a8a8" stroke-width="0.9"/><path d="M5.5 0.5V3.5H8.5" fill="none" stroke="#a8a8a8" stroke-width="0.8"/><path d="M2 3H5M2 5H7M2 7H7M2 9H7" stroke="#b0b0b0" stroke-width="0.8"/></svg></div>
</div>
</div>

<div id="tabs" class="a">
<div class="tab a" style="left:2px;width:53px"><svg class="a" style="left:3.5px;top:3.5px" width="17" height="15"><ellipse cx="8.5" cy="2.8" rx="2.5" ry="1.8" fill="#e8dc50"/><path d="M1 8.5Q3 4 7.5 3.5L9 8Q5 9.5 3 12Z" fill="#2aa02a" stroke="#1a6a1a" stroke-width="0.6"/><path d="M8 5L13 3.5Q16 5 15.5 8L10.5 9.5Z" fill="#2856c8" stroke="#1a3a88" stroke-width="0.6"/><path d="M6 8.5H10V14H6Z" fill="#c8a030" stroke="#806018" stroke-width="0.6"/></svg><span style="left:24.4px">Home</span></div>
<div class="tab a" style="left:59px;width:95px"><svg class="a" style="left:3.5px;top:3.5px" width="17" height="15"><path d="M4.5 3.5L7 1H12L15 4V8H4.5Z" fill="#b4c8e4" stroke="#4a6a9a" stroke-width="0.9"/><path d="M1 6.5Q1 4.5 3 4.5H9L11.5 7L9 9.5H3Q1 9.5 1 7.5Z" fill="#f4e290" stroke="#9a8438" stroke-width="0.9"/><path d="M4.5 9.5H15V14H4.5Z" fill="#b0d0ee" stroke="#4a6a9a" stroke-width="0.9"/></svg><span style="left:23.8px">Schlib1.SchLib</span></div>
<div class="tab a" style="left:158px;width:96px"><svg class="a" style="left:3.5px;top:3.5px" width="17" height="15"><path d="M1.5 9L8 2.5L15 5L8.5 11.5Z" fill="#222"/><path d="M4 8L8 4L12 5.5L8 9.5Z" fill="#555"/><path d="M1.5 9L8.5 11.5V14L1.5 11.5Z" fill="#777"/><path d="M8.5 11.5L15 5V7.5L8.5 14Z" fill="#aaa"/></svg><span style="left:24.1px">PcbLib1.PcbLib</span></div>
<div class="tab a" style="left:260px;width:94px"><svg class="a" style="left:3.5px;top:3.5px" width="17" height="15"><path d="M4.5 3.5L7 1H12L15 4V8H4.5Z" fill="#b4c8e4" stroke="#4a6a9a" stroke-width="0.9"/><path d="M1 6.5Q1 4.5 3 4.5H9L11.5 7L9 9.5H3Q1 9.5 1 7.5Z" fill="#f4e290" stroke="#9a8438" stroke-width="0.9"/><path d="M4.5 9.5H15V14H4.5Z" fill="#b0d0ee" stroke="#4a6a9a" stroke-width="0.9"/></svg><span style="left:23.8px">Schlib3.SchLib</span></div>
<div class="tab a" style="left:359px;width:94px"><svg class="a" style="left:3.5px;top:3.5px" width="17" height="15"><path d="M4.5 3.5L7 1H12L15 4V8H4.5Z" fill="#b4c8e4" stroke="#4a6a9a" stroke-width="0.9"/><path d="M1 6.5Q1 4.5 3 4.5H9L11.5 7L9 9.5H3Q1 9.5 1 7.5Z" fill="#f4e290" stroke="#9a8438" stroke-width="0.9"/><path d="M4.5 9.5H15V14H4.5Z" fill="#b0d0ee" stroke="#4a6a9a" stroke-width="0.9"/></svg><span style="left:23.8px">Schlib1.SchLib</span></div>
<div class="tab a" style="left:458px;width:95px"><svg class="a" style="left:3.5px;top:3.5px" width="17" height="15"><path d="M4.5 3.5L7 1H12L15 4V8H4.5Z" fill="#b4c8e4" stroke="#4a6a9a" stroke-width="0.9"/><path d="M1 6.5Q1 4.5 3 4.5H9L11.5 7L9 9.5H3Q1 9.5 1 7.5Z" fill="#f4e290" stroke="#9a8438" stroke-width="0.9"/><path d="M4.5 9.5H15V14H4.5Z" fill="#b0d0ee" stroke="#4a6a9a" stroke-width="0.9"/></svg><span style="left:23.8px">Schlib2.SchLib</span></div>
<div class="tab a" style="left:557px;width:97px"><svg class="a" style="left:3.5px;top:3.5px" width="17" height="15"><path d="M1.5 9L8 2.5L15 5L8.5 11.5Z" fill="#222"/><path d="M4 8L8 4L12 5.5L8 9.5Z" fill="#555"/><path d="M1.5 9L8.5 11.5V14L1.5 11.5Z" fill="#777"/><path d="M8.5 11.5L15 5V7.5L8.5 14Z" fill="#aaa"/></svg><span style="left:24.0px">PcbLib2.PcbLib</span></div>
<div class="tab a" style="left:659px;width:89px"><svg class="a" style="left:3.5px;top:3.5px" width="17" height="15"><rect x="0.5" y="2" width="14" height="10" fill="#2e7a4c" stroke="#1e4a2c" stroke-width="0.8"/><path d="M2 4.5H13M2 7H13M2 9.5H13" stroke="#9ad8b0" stroke-width="0.9" stroke-dasharray="1.2 0.8"/></svg><span style="left:23.4px">PCB1.PcbDoc</span></div>
</div>
<svg class="a" style="left:214px;top:99px" width="1349" height="445" viewBox="214 99 1349 445">
<rect x="214" y="99" width="1349" height="445" fill="#fffdfa"/>
<rect x="433.2" y="185.4" width="250.59999999999997" height="277.20000000000005" fill="#fdfaa9"/>
<g><line x1="238.5" y1="99" x2="238.5" y2="544" stroke="rgba(0,0,0,0.055)" stroke-width="1"/><line x1="266.5" y1="99" x2="266.5" y2="544" stroke="rgba(0,0,0,0.04)" stroke-width="1" stroke-dasharray="1.5 1.5"/><line x1="294.5" y1="99" x2="294.5" y2="544" stroke="rgba(0,0,0,0.055)" stroke-width="1"/><line x1="322.5" y1="99" x2="322.5" y2="544" stroke="rgba(0,0,0,0.04)" stroke-width="1" stroke-dasharray="1.5 1.5"/><line x1="349.5" y1="99" x2="349.5" y2="544" stroke="rgba(0,0,0,0.055)" stroke-width="1"/><line x1="377.5" y1="99" x2="377.5" y2="544" stroke="rgba(0,0,0,0.04)" stroke-width="1" stroke-dasharray="1.5 1.5"/><line x1="405.5" y1="99" x2="405.5" y2="544" stroke="rgba(0,0,0,0.055)" stroke-width="1"/><line x1="433.5" y1="99" x2="433.5" y2="544" stroke="rgba(0,0,0,0.04)" stroke-width="1" stroke-dasharray="1.5 1.5"/><line x1="461.5" y1="99" x2="461.5" y2="544" stroke="rgba(0,0,0,0.055)" stroke-width="1"/><line x1="489.5" y1="99" x2="489.5" y2="544" stroke="rgba(0,0,0,0.04)" stroke-width="1" stroke-dasharray="1.5 1.5"/><line x1="516.5" y1="99" x2="516.5" y2="544" stroke="rgba(0,0,0,0.055)" stroke-width="1"/><line x1="544.5" y1="99" x2="544.5" y2="544" stroke="rgba(0,0,0,0.04)" stroke-width="1" stroke-dasharray="1.5 1.5"/><line x1="572.5" y1="99" x2="572.5" y2="544" stroke="rgba(0,0,0,0.055)" stroke-width="1"/><line x1="600.5" y1="99" x2="600.5" y2="544" stroke="rgba(0,0,0,0.04)" stroke-width="1" stroke-dasharray="1.5 1.5"/><line x1="628.5" y1="99" x2="628.5" y2="544" stroke="rgba(0,0,0,0.055)" stroke-width="1"/><line x1="656.5" y1="99" x2="656.5" y2="544" stroke="rgba(0,0,0,0.04)" stroke-width="1" stroke-dasharray="1.5 1.5"/><line x1="683.5" y1="99" x2="683.5" y2="544" stroke="rgba(0,0,0,0.055)" stroke-width="1"/><line x1="711.5" y1="99" x2="711.5" y2="544" stroke="rgba(0,0,0,0.04)" stroke-width="1" stroke-dasharray="1.5 1.5"/><line x1="739.5" y1="99" x2="739.5" y2="544" stroke="rgba(0,0,0,0.055)" stroke-width="1"/><line x1="767.5" y1="99" x2="767.5" y2="544" stroke="rgba(0,0,0,0.04)" stroke-width="1" stroke-dasharray="1.5 1.5"/><line x1="795.5" y1="99" x2="795.5" y2="544" stroke="rgba(0,0,0,0.055)" stroke-width="1"/><line x1="823.5" y1="99" x2="823.5" y2="544" stroke="rgba(0,0,0,0.04)" stroke-width="1" stroke-dasharray="1.5 1.5"/><line x1="851.5" y1="99" x2="851.5" y2="544" stroke="rgba(0,0,0,0.055)" stroke-width="1"/><line x1="878.5" y1="99" x2="878.5" y2="544" stroke="rgba(0,0,0,0.04)" stroke-width="1" stroke-dasharray="1.5 1.5"/><line x1="906.5" y1="99" x2="906.5" y2="544" stroke="rgba(0,0,0,0.055)" stroke-width="1"/><line x1="934.5" y1="99" x2="934.5" y2="544" stroke="rgba(0,0,0,0.04)" stroke-width="1" stroke-dasharray="1.5 1.5"/><line x1="962.5" y1="99" x2="962.5" y2="544" stroke="rgba(0,0,0,0.055)" stroke-width="1"/><line x1="990.5" y1="99" x2="990.5" y2="544" stroke="rgba(0,0,0,0.04)" stroke-width="1" stroke-dasharray="1.5 1.5"/><line x1="1018.5" y1="99" x2="1018.5" y2="544" stroke="rgba(0,0,0,0.055)" stroke-width="1"/><line x1="1045.5" y1="99" x2="1045.5" y2="544" stroke="rgba(0,0,0,0.04)" stroke-width="1" stroke-dasharray="1.5 1.5"/><line x1="1073.5" y1="99" x2="1073.5" y2="544" stroke="rgba(0,0,0,0.055)" stroke-width="1"/><line x1="1101.5" y1="99" x2="1101.5" y2="544" stroke="rgba(0,0,0,0.04)" stroke-width="1" stroke-dasharray="1.5 1.5"/><line x1="1129.5" y1="99" x2="1129.5" y2="544" stroke="rgba(0,0,0,0.055)" stroke-width="1"/><line x1="1157.5" y1="99" x2="1157.5" y2="544" stroke="rgba(0,0,0,0.04)" stroke-width="1" stroke-dasharray="1.5 1.5"/><line x1="1185.5" y1="99" x2="1185.5" y2="544" stroke="rgba(0,0,0,0.055)" stroke-width="1"/><line x1="1212.5" y1="99" x2="1212.5" y2="544" stroke="rgba(0,0,0,0.04)" stroke-width="1" stroke-dasharray="1.5 1.5"/><line x1="1240.5" y1="99" x2="1240.5" y2="544" stroke="rgba(0,0,0,0.055)" stroke-width="1"/><line x1="1268.5" y1="99" x2="1268.5" y2="544" stroke="rgba(0,0,0,0.04)" stroke-width="1" stroke-dasharray="1.5 1.5"/><line x1="1296.5" y1="99" x2="1296.5" y2="544" stroke="rgba(0,0,0,0.055)" stroke-width="1"/><line x1="1324.5" y1="99" x2="1324.5" y2="544" stroke="rgba(0,0,0,0.04)" stroke-width="1" stroke-dasharray="1.5 1.5"/><line x1="1352.5" y1="99" x2="1352.5" y2="544" stroke="rgba(0,0,0,0.055)" stroke-width="1"/><line x1="1379.5" y1="99" x2="1379.5" y2="544" stroke="rgba(0,0,0,0.04)" stroke-width="1" stroke-dasharray="1.5 1.5"/><line x1="1407.5" y1="99" x2="1407.5" y2="544" stroke="rgba(0,0,0,0.055)" stroke-width="1"/><line x1="1435.5" y1="99" x2="1435.5" y2="544" stroke="rgba(0,0,0,0.04)" stroke-width="1" stroke-dasharray="1.5 1.5"/><line x1="1463.5" y1="99" x2="1463.5" y2="544" stroke="rgba(0,0,0,0.055)" stroke-width="1"/><line x1="1491.5" y1="99" x2="1491.5" y2="544" stroke="rgba(0,0,0,0.04)" stroke-width="1" stroke-dasharray="1.5 1.5"/><line x1="1519.5" y1="99" x2="1519.5" y2="544" stroke="rgba(0,0,0,0.055)" stroke-width="1"/><line x1="1547.5" y1="99" x2="1547.5" y2="544" stroke="rgba(0,0,0,0.04)" stroke-width="1" stroke-dasharray="1.5 1.5"/><line x1="214" y1="102.5" x2="1563" y2="102.5" stroke="rgba(0,0,0,0.055)" stroke-width="1"/><line x1="214" y1="130.5" x2="1563" y2="130.5" stroke="rgba(0,0,0,0.04)" stroke-width="1" stroke-dasharray="1.5 1.5"/><line x1="214" y1="157.5" x2="1563" y2="157.5" stroke="rgba(0,0,0,0.055)" stroke-width="1"/><line x1="214" y1="185.5" x2="1563" y2="185.5" stroke="rgba(0,0,0,0.04)" stroke-width="1" stroke-dasharray="1.5 1.5"/><line x1="214" y1="213.5" x2="1563" y2="213.5" stroke="rgba(0,0,0,0.055)" stroke-width="1"/><line x1="214" y1="241.5" x2="1563" y2="241.5" stroke="rgba(0,0,0,0.04)" stroke-width="1" stroke-dasharray="1.5 1.5"/><line x1="214" y1="268.5" x2="1563" y2="268.5" stroke="rgba(0,0,0,0.055)" stroke-width="1"/><line x1="214" y1="296.5" x2="1563" y2="296.5" stroke="rgba(0,0,0,0.04)" stroke-width="1" stroke-dasharray="1.5 1.5"/><line x1="214" y1="324.5" x2="1563" y2="324.5" stroke="rgba(0,0,0,0.055)" stroke-width="1"/><line x1="214" y1="352.5" x2="1563" y2="352.5" stroke="rgba(0,0,0,0.04)" stroke-width="1" stroke-dasharray="1.5 1.5"/><line x1="214" y1="380.5" x2="1563" y2="380.5" stroke="rgba(0,0,0,0.055)" stroke-width="1"/><line x1="214" y1="407.5" x2="1563" y2="407.5" stroke="rgba(0,0,0,0.04)" stroke-width="1" stroke-dasharray="1.5 1.5"/><line x1="214" y1="435.5" x2="1563" y2="435.5" stroke="rgba(0,0,0,0.055)" stroke-width="1"/><line x1="214" y1="463.5" x2="1563" y2="463.5" stroke="rgba(0,0,0,0.04)" stroke-width="1" stroke-dasharray="1.5 1.5"/><line x1="214" y1="491.5" x2="1563" y2="491.5" stroke="rgba(0,0,0,0.055)" stroke-width="1"/><line x1="214" y1="518.5" x2="1563" y2="518.5" stroke="rgba(0,0,0,0.04)" stroke-width="1" stroke-dasharray="1.5 1.5"/></g>
<rect x="433.2" y="185.4" width="250.59999999999997" height="277.20000000000005" fill="none" stroke="#4e3214" stroke-width="1.5"/>
<line x1="572.6" y1="99" x2="572.6" y2="544" stroke="#1a1a1a" stroke-width="1.3"/>
<line x1="214" y1="324.8" x2="1563" y2="324.8" stroke="#45433e" stroke-width="2"/>
<g><line x1="349.88" y1="241.22" x2="398.2" y2="241.22" stroke="#000" stroke-width="2.8" stroke-linecap="round"/><path d="M416.4 235.42L433.2 241.22L416.4 247.02Z" fill="#fffdfa" stroke="#000" stroke-width="1"/><path d="M413.59999999999997 235.42L398.2 241.22L413.59999999999997 247.02Z" fill="#fffdfa" stroke="#000" stroke-width="1"/><path d="M413.59999999999997 235.11999999999998V247.32000000000002M416.4 235.11999999999998V247.32000000000002" stroke="#000" stroke-width="1.5" fill="none"/><path d="M413.59999999999997 241.22H416.4" stroke="#000" stroke-width="1.4"/><line x1="349.88" y1="268.98" x2="433.2" y2="268.98" stroke="#000" stroke-width="2.8" stroke-linecap="round"/><line x1="349.88" y1="296.74" x2="416.2" y2="296.74" stroke="#000" stroke-width="2.8" stroke-linecap="round"/><path d="M416.2 290.94L433.2 296.74L416.2 302.54Z" fill="#fffdfa" stroke="#000" stroke-width="1"/><line x1="349.88" y1="324.5" x2="433.2" y2="324.5" stroke="#000" stroke-width="2.8" stroke-linecap="round"/><line x1="349.88" y1="352.26" x2="433.2" y2="352.26" stroke="#000" stroke-width="2.8" stroke-linecap="round"/><line x1="349.88" y1="380.02" x2="398.2" y2="380.02" stroke="#000" stroke-width="2.8" stroke-linecap="round"/><path d="M416.4 374.21999999999997L433.2 380.02L416.4 385.82Z" fill="#fffdfa" stroke="#000" stroke-width="1"/><path d="M413.59999999999997 374.21999999999997L398.2 380.02L413.59999999999997 385.82Z" fill="#fffdfa" stroke="#000" stroke-width="1"/><path d="M413.59999999999997 373.91999999999996V386.12M416.4 373.91999999999996V386.12" stroke="#000" stroke-width="1.5" fill="none"/><path d="M413.59999999999997 380.02H416.4" stroke="#000" stroke-width="1.4"/><line x1="349.88" y1="407.78" x2="398.2" y2="407.78" stroke="#000" stroke-width="2.8" stroke-linecap="round"/><path d="M416.4 401.97999999999996L433.2 407.78L416.4 413.58Z" fill="#fffdfa" stroke="#000" stroke-width="1"/><path d="M413.59999999999997 401.97999999999996L398.2 407.78L413.59999999999997 413.58Z" fill="#fffdfa" stroke="#000" stroke-width="1"/><path d="M413.59999999999997 401.67999999999995V413.88M416.4 401.67999999999995V413.88" stroke="#000" stroke-width="1.5" fill="none"/><path d="M413.59999999999997 407.78H416.4" stroke="#000" stroke-width="1.4"/><line x1="349.88" y1="435.54" x2="398.2" y2="435.54" stroke="#000" stroke-width="2.8" stroke-linecap="round"/><path d="M416.4 429.74L433.2 435.54L416.4 441.34000000000003Z" fill="#fffdfa" stroke="#000" stroke-width="1"/><path d="M413.59999999999997 429.74L398.2 435.54L413.59999999999997 441.34000000000003Z" fill="#fffdfa" stroke="#000" stroke-width="1"/><path d="M413.59999999999997 429.44V441.64000000000004M416.4 429.44V441.64000000000004" stroke="#000" stroke-width="1.5" fill="none"/><path d="M413.59999999999997 435.54H416.4" stroke="#000" stroke-width="1.4"/><line x1="683.8" y1="241.22" x2="767.48" y2="241.22" stroke="#000" stroke-width="2.8" stroke-linecap="round"/><line x1="699.3" y1="268.98" x2="767.48" y2="268.98" stroke="#000" stroke-width="2.8" stroke-linecap="round"/><path d="M683.8 263.18L699.3 268.98L683.8 274.78000000000003Z" fill="#fffdfa" stroke="#000" stroke-width="1"/><line x1="700.8" y1="296.74" x2="767.48" y2="296.74" stroke="#000" stroke-width="2.8" stroke-linecap="round"/><path d="M700.8 290.94L683.8 296.74L700.8 302.54Z" fill="#fffdfa" stroke="#000" stroke-width="1"/><line x1="700.8" y1="324.5" x2="767.48" y2="324.5" stroke="#000" stroke-width="2.8" stroke-linecap="round"/><path d="M700.8 318.7L683.8 324.5L700.8 330.3Z" fill="#fffdfa" stroke="#000" stroke-width="1"/><line x1="700.8" y1="352.26" x2="767.48" y2="352.26" stroke="#000" stroke-width="2.8" stroke-linecap="round"/><path d="M700.8 346.46L683.8 352.26L700.8 358.06Z" fill="#fffdfa" stroke="#000" stroke-width="1"/><line x1="718.8" y1="380.02" x2="767.48" y2="380.02" stroke="#000" stroke-width="2.8" stroke-linecap="round"/><path d="M700.5999999999999 374.21999999999997L683.8 380.02L700.5999999999999 385.82Z" fill="#fffdfa" stroke="#000" stroke-width="1"/><path d="M703.4 374.21999999999997L718.8 380.02L703.4 385.82Z" fill="#fffdfa" stroke="#000" stroke-width="1"/><path d="M703.4 373.91999999999996V386.12M700.5999999999999 373.91999999999996V386.12" stroke="#000" stroke-width="1.5" fill="none"/><path d="M703.4 380.02H700.5999999999999" stroke="#000" stroke-width="1.4"/><line x1="718.8" y1="407.78" x2="767.48" y2="407.78" stroke="#000" stroke-width="2.8" stroke-linecap="round"/><path d="M700.5999999999999 401.97999999999996L683.8 407.78L700.5999999999999 413.58Z" fill="#fffdfa" stroke="#000" stroke-width="1"/><path d="M703.4 401.97999999999996L718.8 407.78L703.4 413.58Z" fill="#fffdfa" stroke="#000" stroke-width="1"/><path d="M703.4 401.67999999999995V413.88M700.5999999999999 401.67999999999995V413.88" stroke="#000" stroke-width="1.5" fill="none"/><path d="M703.4 407.78H700.5999999999999" stroke="#000" stroke-width="1.4"/><line x1="718.8" y1="435.54" x2="767.48" y2="435.54" stroke="#000" stroke-width="2.8" stroke-linecap="round"/><path d="M700.5999999999999 429.74L683.8 435.54L700.5999999999999 441.34000000000003Z" fill="#fffdfa" stroke="#000" stroke-width="1"/><path d="M703.4 429.74L718.8 435.54L703.4 441.34000000000003Z" fill="#fffdfa" stroke="#000" stroke-width="1"/><path d="M703.4 429.44V441.64000000000004M700.5999999999999 429.44V441.64000000000004" stroke="#000" stroke-width="1.5" fill="none"/><path d="M703.4 435.54H700.5999999999999" stroke="#000" stroke-width="1.4"/></g>
<g font-family="Liberation Serif" font-size="23" fill="#000" stroke="#000" stroke-width="0.35"><text x="454.0" y="248.22">ANT</text><text x="410.8" y="234.62" text-anchor="end">1</text><text x="454.0" y="275.98">GND</text><text x="410.8" y="262.38" text-anchor="end">2</text><text x="454.0" y="303.74">Vcc</text><text x="410.8" y="290.14" text-anchor="end">3</text><text x="452.4" y="331.5" textLength="138.2" lengthAdjust="spacingAndGlyphs">RX_SWITCH</text><text x="410.8" y="317.9" text-anchor="end">4</text><text x="454.0" y="359.26" textLength="133.3" lengthAdjust="spacingAndGlyphs">TX_SWITCH</text><text x="410.8" y="345.65999999999997" text-anchor="end">5</text><text x="454.0" y="387.02">DIO0</text><text x="410.8" y="373.41999999999996" text-anchor="end">6</text><text x="454.0" y="414.78">DIO1</text><text x="410.8" y="401.17999999999995" text-anchor="end">7</text><text x="454.0" y="442.54">DIO2</text><text x="410.8" y="428.94" text-anchor="end">8</text><text x="662.5999999999999" y="248.22" text-anchor="end">nSEL</text><text x="706.8" y="234.62">16</text><text x="662.5999999999999" y="275.98" text-anchor="end">SDO</text><text x="706.8" y="262.38">15</text><text x="662.5999999999999" y="303.74" text-anchor="end">SDI</text><text x="706.8" y="290.14">14</text><text x="662.5999999999999" y="331.5" text-anchor="end">SCLK</text><text x="706.8" y="317.9">13</text><text x="662.5999999999999" y="359.26" text-anchor="end">RESET</text><text x="706.8" y="345.65999999999997">12</text><text x="662.5999999999999" y="387.02" text-anchor="end">DIO5</text><text x="706.8" y="373.41999999999996">11</text><text x="662.5999999999999" y="414.78" text-anchor="end">DIO4</text><text x="706.8" y="401.17999999999995">10</text><text x="662.5999999999999" y="442.54" text-anchor="end">DIO3</text><text x="706.8" y="428.94">9</text></g>
<g><rect x="429.7" y="181.8" width="7" height="7" fill="#22dd22" stroke="#0a6a0a" stroke-width="0.9"/><rect x="555.0" y="181.8" width="7" height="7" fill="#22dd22" stroke="#0a6a0a" stroke-width="0.9"/><rect x="680.3" y="181.8" width="7" height="7" fill="#22dd22" stroke="#0a6a0a" stroke-width="0.9"/><rect x="429.7" y="320.9" width="7" height="7" fill="#22dd22" stroke="#0a6a0a" stroke-width="0.9"/><rect x="680.3" y="320.9" width="7" height="7" fill="#22dd22" stroke="#0a6a0a" stroke-width="0.9"/><rect x="429.7" y="459.0" width="7" height="7" fill="#22dd22" stroke="#0a6a0a" stroke-width="0.9"/><rect x="555.0" y="459.0" width="7" height="7" fill="#22dd22" stroke="#0a6a0a" stroke-width="0.9"/><rect x="680.3" y="459.0" width="7" height="7" fill="#22dd22" stroke="#0a6a0a" stroke-width="0.9"/></g>
</svg>

<div class="a" style="left:1563px;top:99px;width:36px;height:449px;background:#efefef"></div>
<div class="a" style="left:1563px;top:99px;width:17px;height:445px;background:linear-gradient(90deg,#e8e8e8,#f0f0f0 40%,#ededed)"></div>
<div class="a" style="left:1567px;top:112px;width:1px;height:420px;background:#e6e6e6"></div>
<div class="a" style="left:1578px;top:99px;width:1px;height:445px;background:#e2e2e2"></div>
<div class="a" style="left:1593px;top:72px;width:7px;height:53px;border:1px solid #d4d4d4;border-right:none;background:#f8f8f8"></div>
<div class="a" style="left:1593px;top:125px;width:7px;height:56px;border:1px solid #d4d4d4;border-right:none;background:#f8f8f8"></div>
<div class="a" style="left:1593px;top:181px;width:7px;height:47px;border:1px solid #d4d4d4;border-right:none;background:#f8f8f8"></div>
<svg class="a" style="left:1568px;top:107px" width="7" height="5"><path d="M0 4.5L3.5 0.5L7 4.5Z" fill="#333"/></svg>
<svg class="a" style="left:1580px;top:102px" width="10" height="7"><path d="M0.5 6L5 1L9.5 6L7.5 6L5 3.5L2.5 6Z" fill="#222"/></svg>
<svg class="a" style="left:1568px;top:533px" width="7" height="5"><path d="M0 0.5H7L3.5 4.5Z" fill="#222"/></svg>
<div class="a" style="left:1563px;top:308px;width:15px;height:28px;border:1px solid #9a9a9a;border-radius:2px;background:linear-gradient(90deg,#f6f6f6,#e8e8e8 50%,#d6d6d6)"></div>
<svg class="a" style="left:1566px;top:317px" width="8" height="8"><path d="M1 1.5H6M1 4H6M1 6.5H6" stroke="#555" stroke-width="1.2"/></svg>
<div class="a" style="left:214px;top:544px;width:1349px;height:4px;background:linear-gradient(#dcdcdc,#ececec)"></div>
<div class="a" style="left:813px;top:544px;width:287px;height:6px;border:1px solid #7e7e7e;border-radius:2px;background:#f4f4f6"></div>
<div class="a" style="left:213px;top:85px;width:1px;height:463px;background:linear-gradient(#d8d8d8,#b0b0b0)"></div>
</body></html>
